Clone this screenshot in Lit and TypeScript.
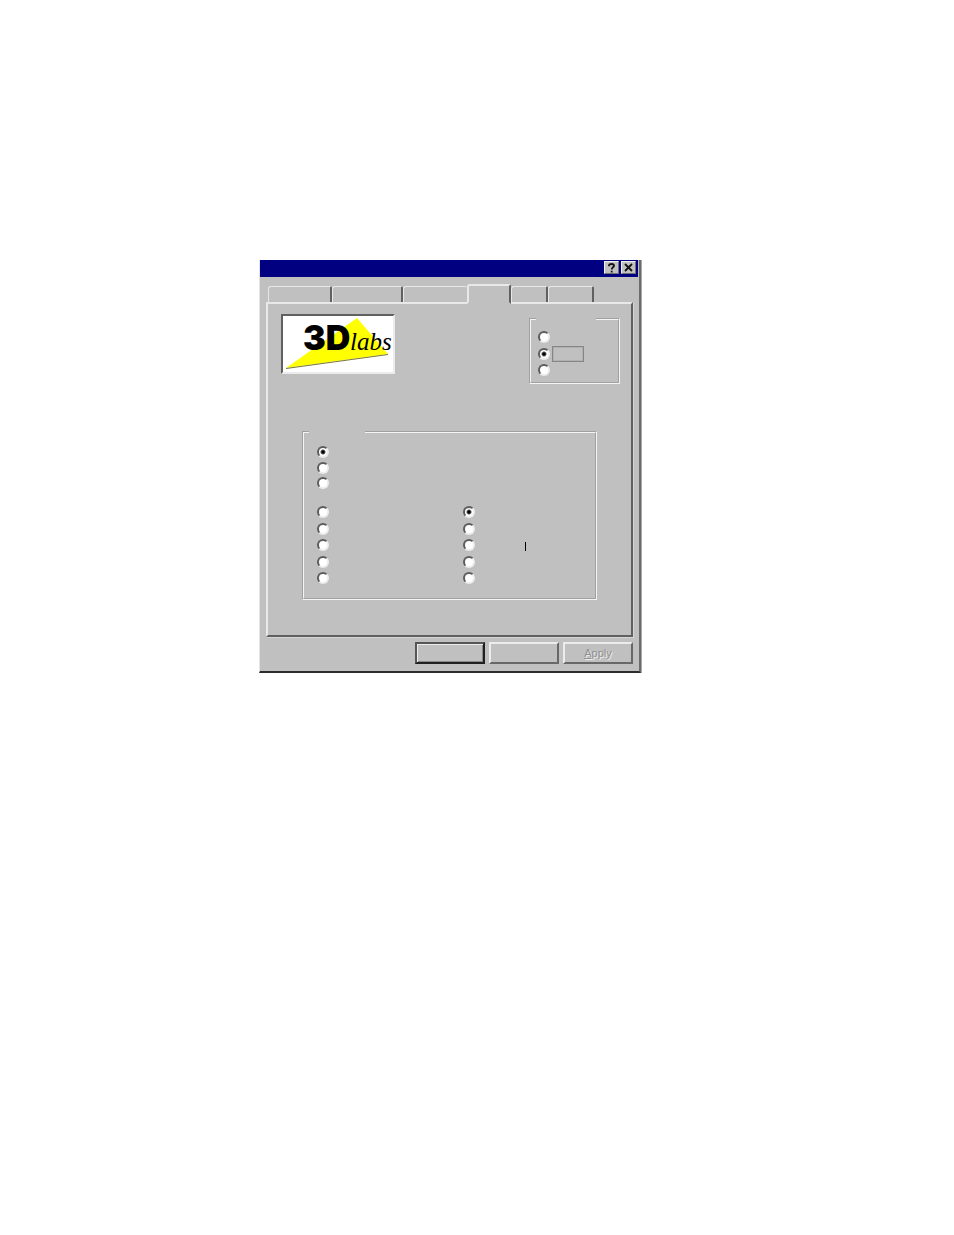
import { LitElement, html, css } from "lit";
import { customElement, state } from "lit/decorators.js";

interface Tab { label: string; size: number; }

const TABS: Tab[] = [
  { label: "Background", size: 64 },
  { label: "Screen Saver", size: 71 },
  { label: "Appearance", size: 64 },
  { label: "3Dlabs", size: 44 },
  { label: "Plus", size: 37 },
  { label: "Settings", size: 46 },
];

@customElement("app-root")
export class AppRoot extends LitElement {
  @state() private active = 3;

  static styles = css`
    :host { display: block; min-height: 100vh; background: #fff; font-family: "Liberation Sans", Arial, sans-serif; }
    * { box-sizing: border-box; }
    main { padding: 260px 313px 0 259px; }
    .dialog { background: #c0c0c0; border-style: solid; border-width: 0 2px 2px 1px; border-color: #e4e4e4 #6c6c6c #2c2c2c #e4e4e4; box-shadow: 1px 0 0 #a8a8a8; }
    .title { display: flex; justify-content: flex-end; gap: 2px; height: 17px; margin: 0 1px 0 0; padding: 1px 2px 0 0; background: #000080; }
    button { font: inherit; margin: 0; padding: 0; border-radius: 0; background: #c0c0c0; }
    .caption { display: flex; width: 15px; height: 13px; align-items: center; justify-content: center; border: 1px solid; border-color: #f0f0f0 #707070 #707070 #f0f0f0; }
    .tabs { display: grid; align-items: end; height: 18px; margin: 7px 6px 0; padding: 0 39px 0 2px; }
    .tab { height: 16px; min-width: 0; border: solid; border-width: 1px 2px 0 1px; border-color: #e8e8e8 #606060 #e8e8e8 #e8e8e8; border-radius: 3px 2px 0 0; }
    .tab.before { border-right-width: 0; }
    .tab.active { position: relative; height: 20px; margin-bottom: -2px; border-top-width: 2px; border-left-width: 2px; border-bottom: 2px solid #c0c0c0; }
    .panel { margin: 0 6px; padding: 10px 0 35px; border: 2px solid; border-color: #e8e8e8 #606060 #606060 #e8e8e8; box-shadow: 1px 1px 0 #d6d6d6; }
    .head { display: flex; justify-content: space-between; align-items: flex-start; padding: 0 11px 0 13px; }
    .logo { display: block; width: 114px; height: 60px; background: #fff; border: 2px solid; border-color: #606060 #ececec #ececec #606060; }
    .logo text { fill: #000; }
    .heavy { font: 900 34px Inter, "Liberation Sans", sans-serif; }
    .script { font: italic 25px "Liberation Serif", serif; }
    fieldset { min-width: 0; margin: 0; padding: 0; border: 2px groove #f4f4f4; }
    legend { height: 2px; margin-left: 5px; padding: 0; }
    .quality { width: 91px; margin-top: 4px; padding: 11px 0 6px 7px; }
    .quality legend { margin-left: -2px; width: 60px; }
    .modes { margin: 47px 34px 0; padding: 13px 0 14px; }
    .modes legend { width: 56px; }
    .stack { display: flex; flex-direction: column; justify-content: space-between; padding-left: 13px; }
    .short { height: 43px; }
    .tall { height: 78px; }
    .columns { display: grid; grid-template-columns: 1fr 1fr; margin-top: 17px; }
    .quality .stack { height: 45px; padding: 0; }
    label { display: flex; align-items: center; height: 12px; }
    input { appearance: none; flex: none; width: 12px; height: 12px; margin: 0; border: 2px solid; border-color: #5c5c5c #ededed #ededed #5c5c5c; border-radius: 50%; background: #fff; }
    input:checked { background: radial-gradient(circle at center, #000 0 1px, #555 2px, #fff 3px); }
    .focus { width: 32px; height: 16px; margin-left: 2px; flex: none; border: 1px solid #868686; box-shadow: inset 0 0 0 1px #b0b0b0; }
    .caret { width: 1px; height: 9px; margin: 2px 0 0 50px; background: #000; }
    footer { display: flex; justify-content: flex-end; gap: 4px; padding: 5px 6px 7px; }
    .action { width: 70px; height: 22px; border: 2px solid; border-color: #ececec #686868 #686868 #ececec; font-size: 11px; line-height: 16px; color: #909090; text-shadow: 1px 1px 0 #eee; }
    .action.default { border-color: #555 #202020 #202020 #555; box-shadow: inset 1px 1px 0 #ececec, inset -1px -1px 0 #888; }
  `;

  private radio(group: string, label: string, checked = false, extra: unknown = "") {
    return html`<label><input type="radio" name=${group} aria-label=${label} ?checked=${checked} />${extra}</label>`;
  }

  render() {
    return html`<main>
      <section class="dialog" role="dialog" aria-label="Display Properties">
        <div class="title">
          <button class="caption" aria-label="Help">
            <svg width="9" height="10" viewBox="0 0 9 10" fill="none" stroke="#111" stroke-width="1.8"><path d="M2 3.2V2.6C2 1.3 3 1 4.5 1S7 1.5 7 2.7C7 4.3 4.7 4.2 4.7 6.5M4.7 7.7V9.4" /></svg>
          </button>
          <button class="caption" aria-label="Close">
            <svg width="9" height="9" viewBox="0 0 9 9" stroke="#111" stroke-width="1.8"><path d="M1 1L8 8M8 1L1 8" /></svg>
          </button>
        </div>
        <div class="tabs" role="tablist" style="grid-template-columns:${TABS.map((t) => `${t.size}fr`).join(" ")}">
          ${TABS.map((t, i) => html`<button role="tab" aria-label=${t.label} aria-selected=${i === this.active}
            class="tab ${i === this.active ? "active" : i === this.active - 1 ? "before" : ""}"
            @click=${() => { this.active = i; }}></button>`)}
        </div>
        <div class="panel">
          <div class="head">
            <svg class="logo" viewBox="0 0 110 56" role="img" aria-label="3Dlabs">
              <path d="M3 52L74 2L105 38Z" fill="#ffff00" />
              <path d="M3 52.5L105 38.5" stroke="#77773a" stroke-width="1" />
              <text class="heavy" x="20" y="34">3D</text>
              <text class="script" x="67" y="34">labs</text>
            </svg>
            <fieldset class="quality">
              <legend aria-label="Quality"></legend>
              <div class="stack">
                ${this.radio("quality", "Low")}
                ${this.radio("quality", "Medium", true, html`<span class="focus"></span>`)}
                ${this.radio("quality", "High")}
              </div>
            </fieldset>
          </div>
          <fieldset class="modes">
            <legend aria-label="Modes"></legend>
            <div class="stack short">
              ${[1, 2, 3].map((n) => this.radio("mode", `Mode ${n}`, n === 1))}
            </div>
            <div class="columns">
              <div class="stack tall">
                ${[1, 2, 3, 4, 5].map((n) => this.radio("left", `Left ${n}`))}
              </div>
              <div class="stack tall">
                ${[1, 2, 3, 4, 5].map((n) => this.radio("right", `Right ${n}`, n === 1, n === 3 ? html`<span class="caret"></span>` : ""))}
              </div>
            </div>
          </fieldset>
        </div>
        <footer>
          <button class="action default" aria-label="OK"></button>
          <button class="action" aria-label="Cancel"></button>
          <button class="action" disabled><u>A</u>pply</button>
        </footer>
      </section>
    </main>`;
  }
}
